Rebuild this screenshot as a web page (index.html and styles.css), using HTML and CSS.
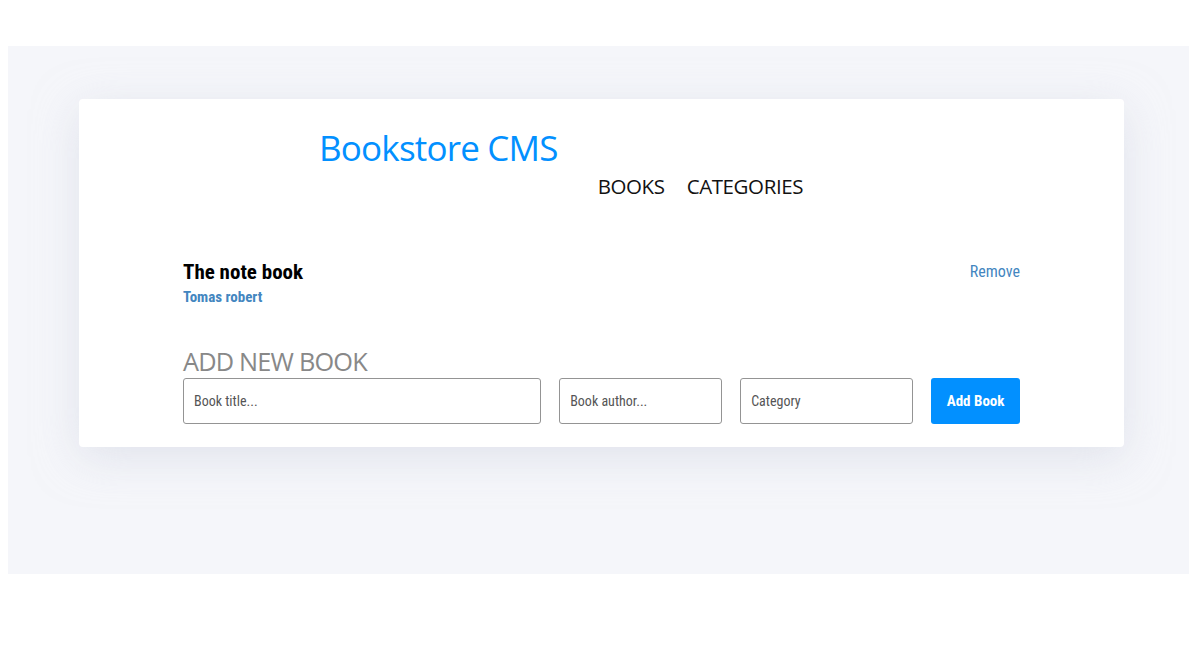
FILE: index.html
```html
<!DOCTYPE html>
<html lang="en">
<head>
<meta charset="utf-8">
<title>Bookstore CMS</title>
<link rel="stylesheet" href="styles.css">
</head>
<body>
<div class="page">
  <div class="panel">
    <div class="card">
      <header class="header">
        <h1 class="logo">Bookstore CMS</h1>
        <nav class="nav">
          <a class="nav-link" href="#">BOOKS</a>
          <a class="nav-link" href="#">CATEGORIES</a>
        </nav>
      </header>
      <ul class="books">
        <li class="book">
          <div class="book-info">
            <h2 class="book-title">The note book</h2>
            <p class="book-author">Tomas robert</p>
          </div>
          <button class="remove" type="button">Remove</button>
        </li>
      </ul>
      <section class="add">
        <h3 class="add-title">ADD NEW BOOK</h3>
        <form class="form">
          <input class="field field-title" type="text" placeholder="Book title...">
          <input class="field field-author" type="text" placeholder="Book author...">
          <input class="field field-cat" type="text" placeholder="Category">
          <button class="submit" type="button">Add Book</button>
        </form>
      </section>
    </div>
  </div>
</div>
</body>
</html>
```
FILE: styles.css
```css
* { box-sizing: border-box; }
body { margin: 0; background: #fff; font-family: "Open Sans", sans-serif; }
.page { padding: 46px 11px 0 8px; }
.panel {
  background: #f5f6fa;
  height: 528px;
  padding: 53px 65px 0 71px;
}
.card {
  background: #fff;
  height: 348px;
  border-radius: 4px;
  box-shadow: 0 10px 44px rgba(208, 212, 224, 0.55);
  padding: 0 104px;
}
.header {
  display: flex;
  align-items: flex-start;
  padding-left: 136px;
  height: 142px;
}
.logo {
  margin: 24px 0 0 0;
  font-family: "Open Sans", sans-serif;
  font-weight: 400;
  font-size: 35px;
  letter-spacing: -0.8px;
  color: #0290ff;
  line-height: 50px;
}
.nav {
  display: flex;
  gap: 22px;
  margin: 74px 0 0 40px;
}
.nav-link {
  font-family: "Open Sans", sans-serif;
  font-size: 20.5px;
  letter-spacing: -0.4px;
  color: #121212;
  text-decoration: none;
  line-height: 26px;
}
.books { list-style: none; margin: 0; padding: 0; }
.book {
  display: flex;
  justify-content: space-between;
  align-items: flex-start;
  padding-top: 18px;
}
.book-title {
  margin: 0;
  font-family: "Roboto Condensed", "Liberation Sans Narrow", "Liberation Sans", sans-serif;
  font-weight: 700;
  font-size: 21px;
  line-height: 26px;
  color: #000;
}
.book-author {
  margin: 3px 0 0 0;
  font-family: "Roboto Condensed", "Liberation Sans Narrow", "Liberation Sans", sans-serif;
  font-weight: 700;
  font-size: 15px;
  line-height: 18px;
  color: #4386bf;
}
.remove {
  border: 0;
  background: none;
  padding: 0;
  margin-top: 3px;
  font-family: "Roboto Condensed", "Liberation Sans Narrow", "Liberation Sans", sans-serif;
  font-size: 16px;
  color: #4386bf;
  cursor: pointer;
}
.add { margin-top: 40px; }
.add-title {
  margin: 0;
  font-family: "Open Sans", sans-serif;
  font-weight: 400;
  font-size: 25.3px;
  letter-spacing: -0.8px;
  color: #888;
  line-height: 30px;
}
.form {
  display: flex;
  gap: 18px;
  margin-top: 2px;
}
.field {
  height: 46px;
  border: 1.5px solid #949494;
  border-radius: 3px;
  padding: 0 10px;
  font-family: "Roboto Condensed", "Liberation Sans Narrow", "Liberation Sans", sans-serif;
  font-size: 14px;
  color: #333;
  background: #fff;
}
.field::placeholder { color: #555; }
.field-title { width: 359px; }
.field-author { width: 163px; }
.field-cat { width: 173px; }
.submit {
  width: 89px;
  height: 46px;
  border: 0;
  border-radius: 3px;
  background: #0290ff;
  color: #fff;
  font-family: "Roboto Condensed", "Liberation Sans Narrow", "Liberation Sans", sans-serif;
  font-weight: 700;
  font-size: 15px;
  cursor: pointer;
}
```
